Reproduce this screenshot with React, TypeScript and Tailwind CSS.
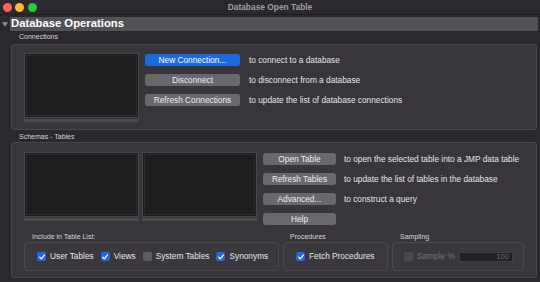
import React from "react";

function Btn({ label, blue, w }: { label: string; blue?: boolean; w: string }) {
  return (
    <div
      className={`${w} h-[12px] rounded-[3px] flex items-center justify-center text-[8.3px] leading-none ${
        blue ? "bg-[#1b6be0] text-white" : "bg-[#69686d] text-[#ececec]"
      }`}>
      {label}
    </div>
  );
}

function ListBox() {
  return (
    <div className="flex flex-col w-[115px]">
      <div className="h-[65px] border border-[#47464b] bg-[#1e1e1f] p-px">
        <div className="w-full h-full border border-[#2b2a2d]"></div>
      </div>
      <div className="h-[3px] mt-px bg-[#4a494e]"></div>
    </div>
  );
}

function Check({ on, disabled }: { on?: boolean; disabled?: boolean }) {
  if (on) {
    return (
      <div className="w-[9px] h-[9px] rounded-[2px] bg-[#1b6be0] flex items-center justify-center">
        <svg viewBox="0 0 10 10" className="w-[8px] h-[8px]">
          <path d="M2 5.2 L4.1 7.3 L8 2.6" fill="none" stroke="white" strokeWidth={1.6} strokeLinecap="round" strokeLinejoin="round" />
        </svg>
      </div>
    );
  }
  return (
    <div className={`w-[9px] h-[9px] rounded-[2px] ${disabled ? "bg-[#4a494e]" : "bg-[#5c5b60]"}`}></div>
  );
}

export default function App() {
  return (
    <div className="w-[540px] h-[282px] bg-[#2b292d] overflow-hidden font-['Liberation_Sans',Arial,sans-serif] text-[#e4e4e4]">
      {/* Title bar */}
      <div className="h-[14px] grid grid-cols-[1fr_auto_1fr] items-center">
        <div className="flex items-center gap-[3.5px] pl-[2.5px]">
          <div className="w-[9px] h-[9px] rounded-full bg-[#fe5f57]"></div>
          <div className="w-[9px] h-[9px] rounded-full bg-[#febc2e]"></div>
          <div className="w-[9px] h-[9px] rounded-full bg-[#28c840]"></div>
        </div>
        <div className="text-[8.4px] font-bold text-[#9d9ca1] leading-none">Database Open Table</div>
        <div></div>
      </div>
      <div className="h-px bg-[#1f1e21]"></div>

      {/* Header */}
      <div className="flex items-center mt-[2px] h-[14px]">
        <div className="w-[10px] flex justify-center">
          <svg viewBox="0 0 8 6" className="w-[6px] h-[5px]">
            <path d="M0 0 H8 L4 6 Z" fill="#8e8d92" />
          </svg>
        </div>
        <div className="w-[528px] h-full bg-[#525156] flex items-center pl-px">
          <span className="text-[11.3px] font-bold text-white leading-none">Database Operations</span>
        </div>
      </div>

      {/* Connections */}
      <div className="pl-[19px] mt-[2px] text-[7px] leading-[8px] text-[#d4d4d6]">Connections</div>
      <div className="ml-[11px] mt-[3px] w-[526px] h-[86px] rounded-[3px] border border-[#49474c] bg-[#38363b] pl-[12px] pt-[8px] flex">
        <ListBox />
        <div className="ml-[6px] mt-px flex flex-col gap-[8px]">
          <Btn label="New Connection..." blue w="w-[95px]" />
          <Btn label="Disconnect" w="w-[95px]" />
          <Btn label="Refresh Connections" w="w-[95px]" />
        </div>
        <div className="ml-[9px] mt-px flex flex-col gap-[8px] text-[8.3px]">
          <div className="h-[12px] flex items-center">to connect to a database</div>
          <div className="h-[12px] flex items-center">to disconnect from a database</div>
          <div className="h-[12px] flex items-center">to update the list of database connections</div>
        </div>
      </div>

      {/* Schemas */}
      <div className="pl-[19px] mt-[3px] text-[7px] leading-[8px] text-[#d4d4d6]">Schemas - Tables</div>
      <div className="ml-[11px] mt-[1px] w-[526px] h-[136px] rounded-[3px] border border-[#49474c] bg-[#38363b] pl-[12px] pt-[9px] flex flex-col">
        <div className="flex">
          <ListBox />
          <div className="ml-[3px]">
            <ListBox />
          </div>
          <div className="ml-[6px] mt-px flex flex-col gap-[8px]">
            <Btn label="Open Table" w="w-[73px]" />
            <Btn label="Refresh Tables" w="w-[73px]" />
            <Btn label="Advanced..." w="w-[73px]" />
            <Btn label="Help" w="w-[73px]" />
          </div>
          <div className="ml-[8px] mt-px flex flex-col gap-[8px] text-[8.3px]">
            <div className="h-[12px] flex items-center">to open the selected table into a JMP data table</div>
            <div className="h-[12px] flex items-center">to update the list of tables in the database</div>
            <div className="h-[12px] flex items-center">to construct a query</div>
          </div>
        </div>

        <div className="flex mt-[8px] gap-[4px]">
          <div className="flex flex-col w-[255px]">
            <div className="pl-[8px] text-[7px] leading-[8px] text-[#d4d4d6]">Include in Table List:</div>
            <div className="mt-[1px] h-[29px] rounded-[4px] border border-[#4a484d] bg-[#3a383d] flex items-center pl-[12px] text-[8.3px]">
              <Check on />
              <span className="ml-[4px]">User Tables</span>
              <div className="ml-[7px]"><Check on /></div>
              <span className="ml-[4px]">Views</span>
              <div className="ml-[7px]"><Check /></div>
              <span className="ml-[4px]">System Tables</span>
              <div className="ml-[7px]"><Check on /></div>
              <span className="ml-[4px]">Synonyms</span>
            </div>
          </div>
          <div className="flex flex-col w-[105px]">
            <div className="pl-[7px] text-[7px] leading-[8px] text-[#d4d4d6]">Procedures</div>
            <div className="mt-[1px] h-[29px] rounded-[4px] border border-[#4a484d] bg-[#3a383d] flex items-center pl-[12px] text-[8.3px]">
              <Check on />
              <span className="ml-[4px]">Fetch Procedures</span>
            </div>
          </div>
          <div className="flex flex-col w-[132px]">
            <div className="pl-[8px] text-[7px] leading-[8px] text-[#d4d4d6]">Sampling</div>
            <div className="mt-[1px] h-[29px] rounded-[4px] border border-[#4a484d] bg-[#3a383d] flex items-center pl-[11px] text-[8.3px]">
              <Check disabled />
              <span className="ml-[4px] text-[#727176]">Sample %</span>
              <div className="ml-[4px] w-[54px] h-[10px] bg-[#232224] border border-[#3f3e42] text-right pr-[3px] text-[7.5px] leading-[8px] text-[#6b6a6f]">
                100
              </div>
            </div>
          </div>
        </div>
      </div>
    </div>
  );
}
